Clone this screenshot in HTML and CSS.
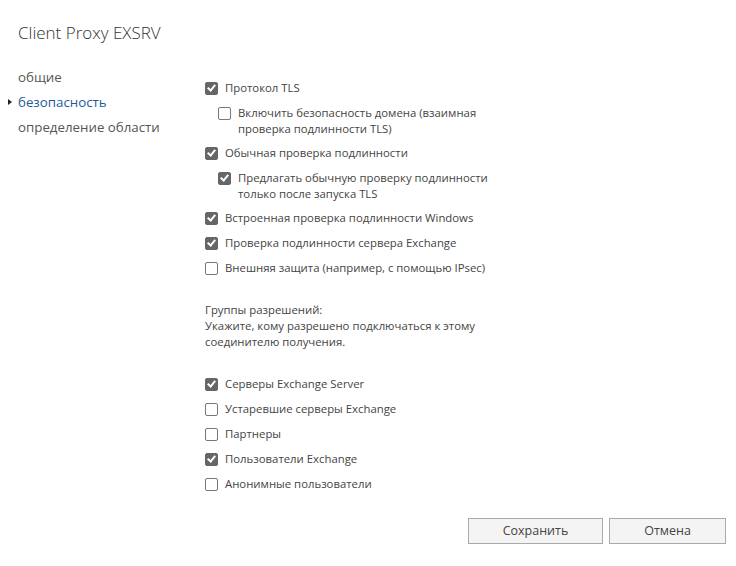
FILE: index.html
```html
<!DOCTYPE html>
<html lang="ru">
<head>
<meta charset="utf-8">
<title>Client Proxy EXSRV</title>
<link rel="stylesheet" href="styles.css">
</head>
<body>
<div class="page">
  <h1 class="title">Client Proxy EXSRV</h1>
  <div class="main">
    <nav class="nav">
      <div class="nav-item">общие</div>
      <div class="nav-item active">безопасность</div>
      <div class="nav-item">определение области</div>
    </nav>
    <div class="content">
      <div class="opt"><span class="cb checked"></span><span class="lbl">Протокол TLS</span></div>
      <div class="opt sub"><span class="cb"></span><span class="lbl">Включить безопасность домена (взаимная<br>проверка подлинности TLS)</span></div>
      <div class="opt"><span class="cb checked"></span><span class="lbl">Обычная проверка подлинности</span></div>
      <div class="opt sub"><span class="cb checked"></span><span class="lbl">Предлагать обычную проверку подлинности<br>только после запуска TLS</span></div>
      <div class="opt"><span class="cb checked"></span><span class="lbl">Встроенная проверка подлинности Windows</span></div>
      <div class="opt"><span class="cb checked"></span><span class="lbl">Проверка подлинности сервера Exchange</span></div>
      <div class="opt"><span class="cb"></span><span class="lbl">Внешняя защита (например, с помощью IPsec)</span></div>

      <p class="group">Группы разрешений:<br>Укажите, кому разрешено подключаться к этому<br>соединителю получения.</p>

      <div class="opt low"><span class="cb checked"></span><span class="lbl">Серверы Exchange Server</span></div>
      <div class="opt low"><span class="cb"></span><span class="lbl">Устаревшие серверы Exchange</span></div>
      <div class="opt low"><span class="cb"></span><span class="lbl">Партнеры</span></div>
      <div class="opt low"><span class="cb checked"></span><span class="lbl">Пользователи Exchange</span></div>
      <div class="opt low"><span class="cb"></span><span class="lbl">Анонимные пользователи</span></div>
    </div>
  </div>
  <div class="actions">
    <button class="btn save">Сохранить</button>
    <button class="btn cancel">Отмена</button>
  </div>
</div>
</body>
</html>
```
FILE: styles.css
```css
html, body {
  margin: 0;
  padding: 0;
  background: #fff;
}
body {
  font-family: "Open Sans", "Noto Sans", sans-serif;
  color: #444;
  width: 736px;
  height: 566px;
  overflow: hidden;
}
.title {
  margin: 0;
  padding: 21px 0 0 18px;
  height: 28px;
  font-size: 17px;
  font-weight: 300;
  color: #333;
  line-height: 24px;
}
.main {
  display: flex;
  margin-top: 16px;
}
.nav {
  width: 205px;
  flex: none;
}
.nav-item {
  position: relative;
  padding-left: 18px;
  font-size: 13.3px;
  height: 25px;
  line-height: 25px;
  color: #555;
}
.nav-item.active {
  color: #1e5b98;
}
.nav-item.active::before {
  content: "";
  position: absolute;
  left: 8px;
  top: 9px;
  border-left: 4px solid #222;
  border-top: 3.5px solid transparent;
  border-bottom: 3.5px solid transparent;
}
.content {
  padding-top: 15px;
  font-size: 11.35px;
}
.opt {
  display: flex;
  align-items: flex-start;
  line-height: 16px;
  margin-bottom: 8.6px;
}
.opt.low {
  margin-bottom: 9px;
}
.opt.sub {
  padding-left: 13px;
}
.cb {
  flex: none;
  width: 11px;
  height: 11px;
  margin-top: 2px;
  margin-right: 7px;
  border: 1px solid #777;
  border-radius: 2px;
  background: #fff;
  position: relative;
}
.cb.checked {
  background: #666;
  border-color: #666;
}
.cb.checked::after {
  content: "";
  position: absolute;
  left: 3px;
  top: 0px;
  width: 3px;
  height: 6px;
  border-right: 2px solid #fff;
  border-bottom: 2px solid #fff;
  transform: rotate(40deg);
}
.lbl {
  color: #444;
}
.group {
  margin: 26px 0 26px 0;
  line-height: 16px;
  color: #444;
}
.actions {
  display: flex;
  justify-content: flex-end;
  gap: 6px;
  padding-right: 10px;
  margin-top: 17px;
}
.btn {
  height: 26px;
  border: 1px solid #a9a9a9;
  background: #f4f4f4;
  font-family: inherit;
  font-size: 12.5px;
  color: #444;
  padding: 0;
}
.btn.save { width: 135px; }
.btn.cancel { width: 117px; }
```
